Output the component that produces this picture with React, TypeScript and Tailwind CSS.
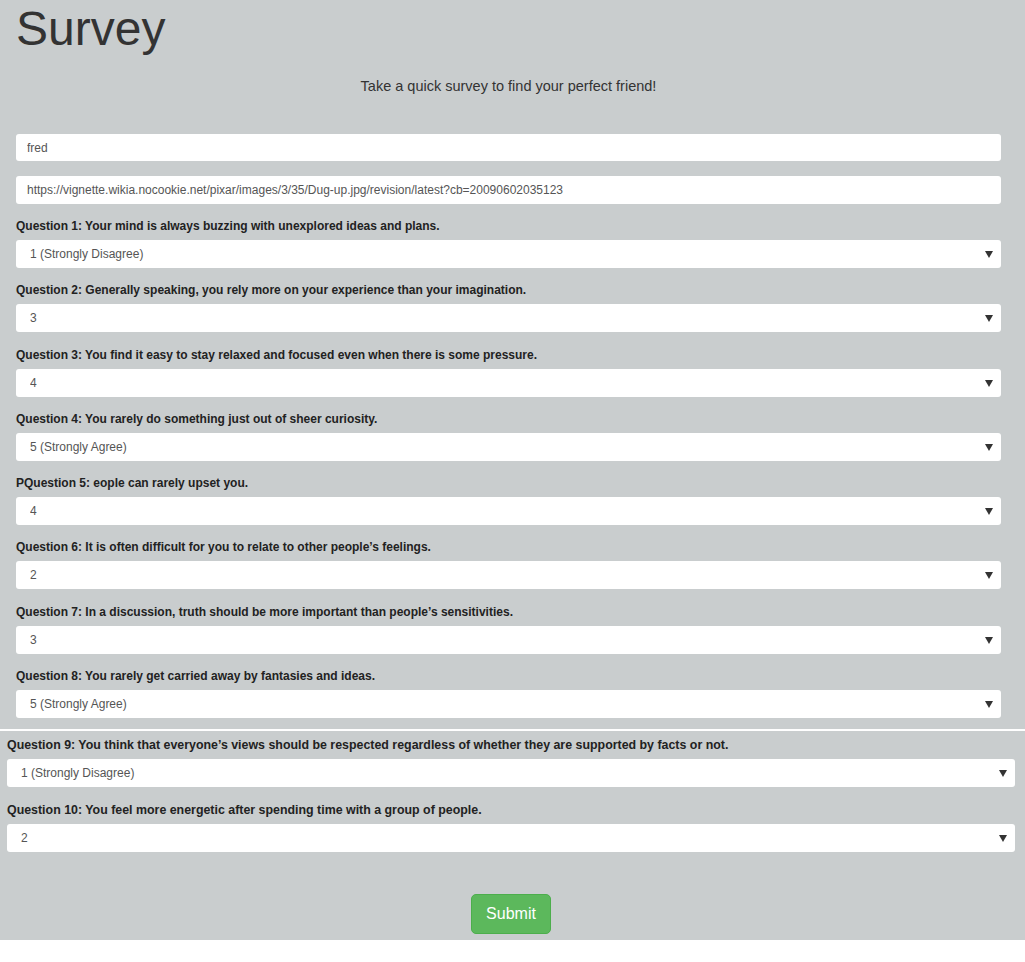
import { useState } from 'react';

const OPTIONS = ['1 (Strongly Disagree)', '2', '3', '4', '5 (Strongly Agree)'];

const QUESTIONS = [
  { label: 'Question 1: Your mind is always buzzing with unexplored ideas and plans.', value: '1 (Strongly Disagree)' },
  { label: 'Question 2: Generally speaking, you rely more on your experience than your imagination.', value: '3' },
  { label: 'Question 3: You find it easy to stay relaxed and focused even when there is some pressure.', value: '4' },
  { label: 'Question 4: You rarely do something just out of sheer curiosity.', value: '5 (Strongly Agree)' },
  { label: 'PQuestion 5: eople can rarely upset you.', value: '4' },
  { label: 'Question 6: It is often difficult for you to relate to other people\u2019s feelings.', value: '2' },
  { label: 'Question 7: In a discussion, truth should be more important than people\u2019s sensitivities.', value: '3' },
  { label: 'Question 8: You rarely get carried away by fantasies and ideas.', value: '5 (Strongly Agree)' },
];

const MORE = [
  { label: 'Question 9: You think that everyone\u2019s views should be respected regardless of whether they are supported by facts or not.', value: '1 (Strongly Disagree)' },
  { label: 'Question 10: You feel more energetic after spending time with a group of people.', value: '2' },
];

function Question({ label, initial, gap, labelSize }: { label: string; initial: string; gap: string; labelSize: string }) {
  const [value, setValue] = useState(initial);
  return (
    <div className={gap}>
      <label className={`block ${labelSize} leading-[17px] font-bold text-[#222] mb-[5px]`}>{label}</label>
      <div className="relative">
        <select
          value={value}
          onChange={(e) => setValue(e.target.value)}
          className="w-full h-[28px] appearance-none bg-white rounded-[3px] pl-[14px] text-[12px] text-[#555] outline-none"
        >
          {OPTIONS.map((o) => (
            <option key={o} value={o}>{o}</option>
          ))}
        </select>
        <svg className="absolute right-[8px] top-[11px] pointer-events-none" width="8" height="7" viewBox="0 0 8 7">
          <path d="M0 0 H8 L4 7 Z" fill="#333" />
        </svg>
      </div>
    </div>
  );
}

export default function App() {
  const [name, setName] = useState('fred');
  const [photo, setPhoto] = useState('https://vignette.wikia.nocookie.net/pixar/images/3/35/Dug-up.jpg/revision/latest?cb=20090602035123');

  return (
    <div className="bg-white min-h-screen font-['Liberation_Sans',Arial,sans-serif]">
      <div className="bg-[#c9cdce] pl-[16px] pr-[24px] pb-[11px]">
        <h1 className="text-[48px] leading-[53px] text-[#333] pt-[2px]">Survey</h1>
        <p className="text-center text-[14.5px] leading-[24px] text-[#333] mt-[19px]">Take a quick survey to find your perfect friend!</p>

        <input
          value={name}
          onChange={(e) => setName(e.target.value)}
          className="block w-full h-[27px] mt-[36px] bg-white rounded-[3px] px-[11px] text-[12px] text-[#555] outline-none"
        />
        <input
          value={photo}
          onChange={(e) => setPhoto(e.target.value)}
          className="block w-full h-[28px] mt-[15px] mb-[14px] bg-white rounded-[3px] px-[11px] text-[12px] text-[#555] outline-none"
        />

        {QUESTIONS.map((q, i) => (
          <Question
            key={q.label}
            label={q.label}
            initial={q.value}
            labelSize="text-[12px]"
            gap={i === QUESTIONS.length - 1 ? '' : 'mb-[14.3px]'}
          />
        ))}
      </div>

      <div className="h-[2px] bg-white" />

      <div className="bg-[#c9cdce] pl-[7px] pr-[10px] pt-[6px] pb-[6px]">
        {MORE.map((q, i) => (
          <Question
            key={q.label}
            label={q.label}
            initial={q.value}
            labelSize="text-[12.4px]"
            gap={i === MORE.length - 1 ? '' : 'mb-[15px]'}
          />
        ))}
        <div className="flex justify-center mt-[42px]">
          <button className="w-[80px] h-[40px] bg-[#5cb85c] border border-[#4cae4c] rounded-[5px] text-white text-[16px]">
            Submit
          </button>
        </div>
      </div>
    </div>
  );
}
